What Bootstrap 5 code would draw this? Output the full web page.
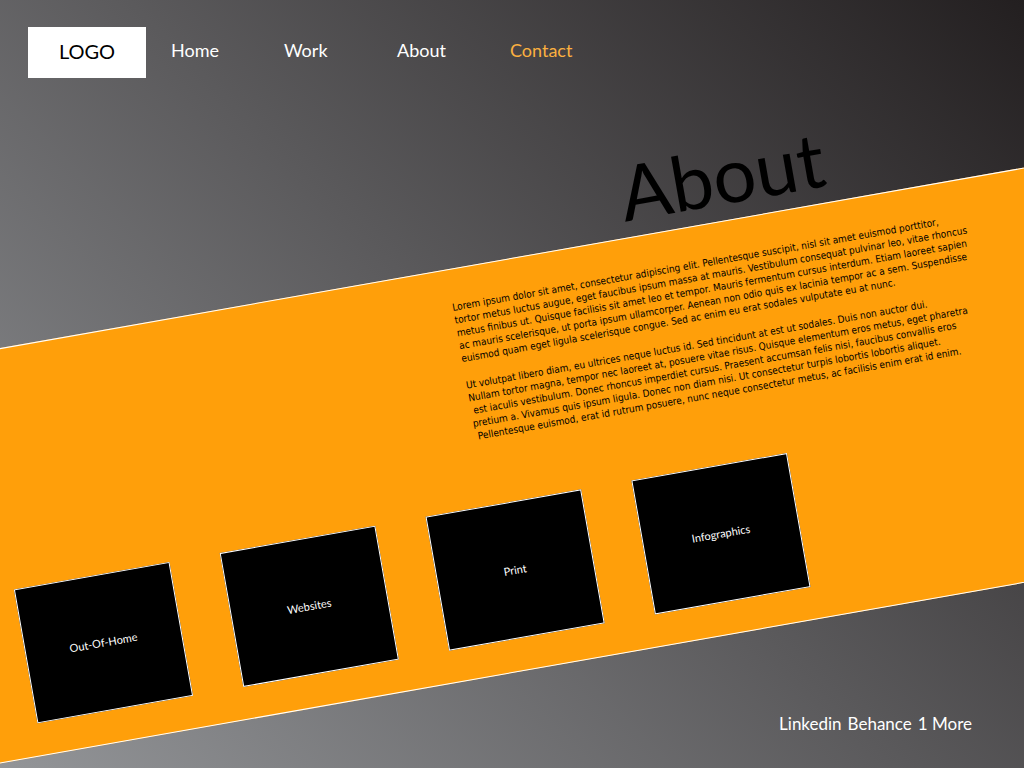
<!DOCTYPE html>
<html lang="en">
<head>
<meta charset="utf-8">
<meta name="viewport" content="width=device-width, initial-scale=1">
<title>About</title>
<link href="https://cdn.jsdelivr.net/npm/bootstrap@5.3.0/dist/css/bootstrap.min.css" rel="stylesheet">
<style>
body { font-family: Lato, "Noto Sans", sans-serif; background: #58595b; }
.page-shell { background: linear-gradient(45deg, #939598, #231f20); }
.site-header { padding: 27px 28px; }
.logo-box { width: 118px; height: 51px; font-size: 20px; margin-right: 25px; padding-bottom: 4px; }
.site-nav { font-size: 18px; line-height: 24px; padding-bottom: 6px; }
.site-nav li { width: 113px; }
.site-nav .active { color: #fbb040; }
/* the heading and the band turn together about the middle of the band */
.slant { margin-top: 73px; transform: rotate(-10deg); transform-origin: 50% calc(100% - 204px); }
.slant-title { font-size: 76px; line-height: 76px; margin-left: 65%; margin-bottom: 7px; }
.band { margin: 0 -120px; padding: 31px 120px 32px 119px; background: #ff9f0a; border: 1px solid #fff; }
.band-text { margin-left: 47%; font-family: "DejaVu Sans Condensed", "DejaVu Sans", sans-serif; font-size: 10px; line-height: 13px; }
.band-text p { margin-bottom: 14px; }
.tiles { gap: 51px; margin-top: 64px; }
.tile { width: 158px; height: 136px; border: 1px solid #fff; font-size: 11px; }
.site-footer { font-size: 17px; line-height: 24px; gap: 6px; padding: 0 52px 32px; }
</style>
</head>
<body>
<div class="page-shell min-vh-100 d-flex flex-column overflow-hidden">
  <header class="site-header d-flex align-items-center">
    <a href="#" class="logo-box bg-white text-black text-decoration-none d-flex align-items-center justify-content-center">LOGO</a>
    <nav aria-label="Main">
      <ul class="site-nav list-unstyled d-flex mb-0">
        <li><a href="#" class="text-white text-decoration-none">Home</a></li>
        <li><a href="#" class="text-white text-decoration-none">Work</a></li>
        <li><a href="#" class="text-white text-decoration-none">About</a></li>
        <li><a href="#" class="active text-decoration-none">Contact</a></li>
      </ul>
    </nav>
  </header>
  <main class="slant text-black">
    <h1 class="slant-title fw-normal">About</h1>
    <div class="band">
      <div class="band-text text-nowrap">
        <p>Lorem ipsum dolor sit amet, consectetur adipiscing elit. Pellentesque suscipit, nisl sit amet euismod porttitor,<br>
        tortor metus luctus augue, eget faucibus ipsum massa at mauris. Vestibulum consequat pulvinar leo, vitae rhoncus<br>
        metus finibus ut. Quisque facilisis sit amet leo et tempor. Mauris fermentum cursus interdum. Etiam laoreet sapien<br>
        ac mauris scelerisque, ut porta ipsum ullamcorper. Aenean non odio quis ex lacinia tempor ac a sem. Suspendisse<br>
        euismod quam eget ligula scelerisque congue. Sed ac enim eu erat sodales vulputate eu at nunc.</p>
        <p class="mb-0">Ut volutpat libero diam, eu ultrices neque luctus id. Sed tincidunt at est ut sodales. Duis non auctor dui.<br>
        Nullam tortor magna, tempor nec laoreet at, posuere vitae risus. Quisque elementum eros metus, eget pharetra<br>
        &nbsp;est iaculis vestibulum. Donec rhoncus imperdiet cursus. Praesent accumsan felis nisi, faucibus convallis eros<br>
        pretium a. Vivamus quis ipsum ligula. Donec non diam nisi. Ut consectetur turpis lobortis lobortis aliquet.<br>
        &nbsp;Pellentesque euismod, erat id rutrum posuere, nunc neque consectetur metus, ac facilisis enim erat id enim.</p>
      </div>
      <div class="tiles d-flex">
        <a href="#" class="tile bg-black text-white text-decoration-none d-flex align-items-center justify-content-center">Out-Of-Home</a>
        <a href="#" class="tile bg-black text-white text-decoration-none d-flex align-items-center justify-content-center">Websites</a>
        <a href="#" class="tile bg-black text-white text-decoration-none d-flex align-items-center justify-content-center">Print</a>
        <a href="#" class="tile bg-black text-white text-decoration-none d-flex align-items-center justify-content-center">Infographics</a>
      </div>
    </div>
  </main>
  <footer class="site-footer d-flex justify-content-end mt-auto">
    <a href="#" class="text-white text-decoration-none">Linkedin</a>
    <a href="#" class="text-white text-decoration-none">Behance</a>
    <a href="#" class="text-white text-decoration-none">1 More</a>
  </footer>
</div>
<script src="https://cdn.jsdelivr.net/npm/bootstrap@5.3.0/dist/js/bootstrap.bundle.min.js"></script>
</body>
</html>
